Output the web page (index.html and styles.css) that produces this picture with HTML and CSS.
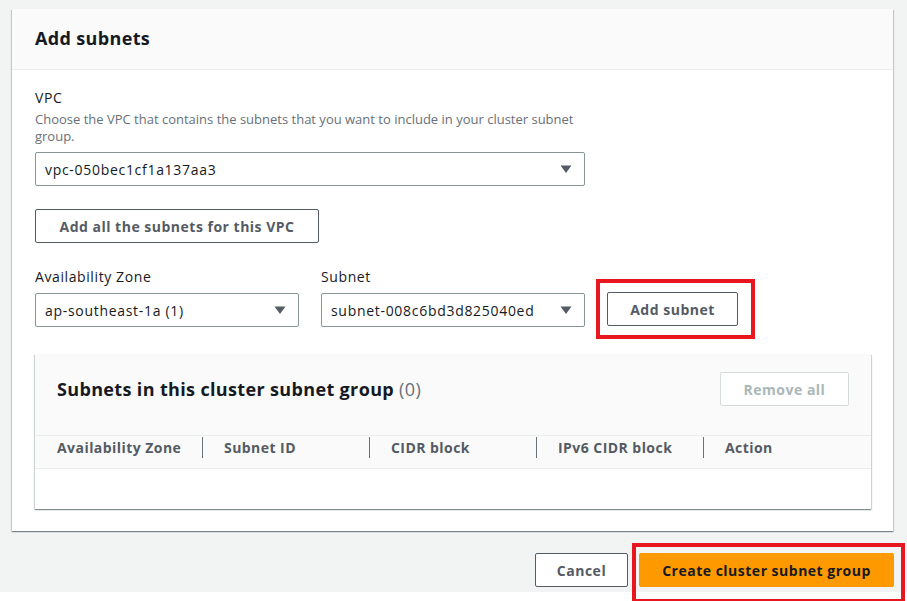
FILE: index.html
```html
<!DOCTYPE html>
<html>
<head>
<meta charset="utf-8">
<link rel="stylesheet" href="styles.css">
</head>
<body>
<div class="page">
  <section class="card">
    <header class="card-header"><h2>Add subnets</h2></header>
    <div class="card-body">
      <div class="field">
        <div class="label">VPC</div>
        <div class="desc">Choose the VPC that contains the subnets that you want to include in your cluster subnet group.</div>
        <div class="select wide">
          <span>vpc-050bec1cf1a137aa3</span>
          <svg class="caret" width="12" height="10" viewBox="0 0 12 10"><path d="M0.5 1.5h11L6 9z" fill="#545b64"/></svg>
        </div>
      </div>
      <button class="btn btn-all">Add all the subnets for this VPC</button>
      <div class="row">
        <div class="col">
          <div class="label">Availability Zone</div>
          <div class="select half">
            <span>ap-southeast-1a (1)</span>
            <svg class="caret" width="12" height="10" viewBox="0 0 12 10"><path d="M0.5 1.5h11L6 9z" fill="#545b64"/></svg>
          </div>
        </div>
        <div class="col">
          <div class="label">Subnet</div>
          <div class="select half">
            <span>subnet-008c6bd3d825040ed</span>
            <svg class="caret" width="12" height="10" viewBox="0 0 12 10"><path d="M0.5 1.5h11L6 9z" fill="#545b64"/></svg>
          </div>
        </div>
        <div class="highlight-wrap add-wrap">
          <button class="btn btn-add">Add subnet</button>
          <div class="red-box box-add"></div>
        </div>
      </div>
      <div class="table-card">
        <div class="table-header">
          <h3>Subnets in this cluster subnet group <span class="count">(0)</span></h3>
          <button class="btn btn-disabled">Remove all</button>
        </div>
        <div class="thead">
          <div class="th">Availability Zone</div>
          <div class="th sep">Subnet ID</div>
          <div class="th sep">CIDR block</div>
          <div class="th sep">IPv6 CIDR block</div>
          <div class="th sep">Action</div>
        </div>
        <div class="tbody"></div>
      </div>
    </div>
  </section>
  <div class="footer">
    <button class="btn btn-cancel">Cancel</button>
    <div class="highlight-wrap">
      <button class="btn btn-primary">Create cluster subnet group</button>
      <div class="red-box box-create"></div>
    </div>
  </div>
</div>
</body>
</html>
```

FILE: styles.css
```css
* { box-sizing: border-box; }
html, body { margin: 0; padding: 0; background: #fff; }
body {
  font-family: "Open Sans", "Liberation Sans", sans-serif;
  color: #16191f;
  width: 907px;
  height: 601px;
  overflow: hidden;
}
.page {
  background: #f2f3f3;
  height: 592px;
  padding: 9px 0 0 12px;
}
.card {
  width: 881px;
  background: #fff;
  box-shadow: 0 1px 1px 0 rgba(0,28,36,0.3), 1px 1px 1px 0 rgba(0,28,36,0.15), -1px 1px 1px 0 rgba(0,28,36,0.15);
}
.card-header {
  height: 61px;
  background: #fafafa;
  border-bottom: 1px solid #eaeded;
  padding: 0 23px;
  display: flex;
  align-items: center;
}
.card-header h2 {
  margin: 0;
  font-size: 18px;
  font-weight: 700;
  letter-spacing: 0.35px;
  padding-bottom: 2px;
}
.card-body {
  padding: 17px 22px 22px 23px;
}
.label {
  font-size: 14px;
  line-height: 22px;
  letter-spacing: 0.6px;
}
.desc {
  font-size: 13px;
  line-height: 17px;
  color: #687078;
  width: 550px;
  letter-spacing: 0;
  margin-top: 2px;
}
.select {
  height: 34px;
  border: 1px solid #879596;
  border-radius: 2px;
  display: flex;
  align-items: center;
  justify-content: space-between;
  padding: 0 12px 0 9px;
  font-size: 14px;
  letter-spacing: 0.7px;
  margin-top: 7px;
}
.select.wide { width: 550px; }
.select.half { width: 264px; margin-top: 5px; }
.caret { display: block; }
.btn {
  display: block;
  font-family: "Open Sans", "Liberation Sans", sans-serif;
  font-size: 14px;
  font-weight: 700;
  color: #545b64;
  background: #fff;
  border: 1px solid #545b64;
  border-radius: 2px;
  height: 34px;
  padding: 0 20px;
  letter-spacing: 0.5px;
}
.btn-all {
  margin-top: 23px;
  width: 284px;
  padding: 0;
}
.row {
  display: flex;
  align-items: flex-end;
  gap: 22px;
  margin-top: 23px;
}
.highlight-wrap { position: relative; }
.btn-add {
  width: 131px;
  padding: 0;
  margin-bottom: 1px;
}
.red-box {
  position: absolute;
  border: 4px solid #e8161f;
  pointer-events: none;
}
.box-add { left: -11px; top: -13px; width: 159px; height: 60px; }
.box-create { left: -7px; top: -10px; width: 273px; height: 60px; }
.table-card {
  margin-top: 27px;
  width: 836px;
  background: #fff;
  box-shadow: 0 1px 1px 0 rgba(0,28,36,0.3), 1px 1px 1px 0 rgba(0,28,36,0.15), -1px 1px 1px 0 rgba(0,28,36,0.15);
}
.table-header {
  background: #fafafa;
  height: 82px;
  border-bottom: 1px solid #eaeded;
  display: flex;
  justify-content: space-between;
  align-items: flex-start;
  padding: 18px 22px 0 22px;
}
.table-header h3 {
  margin: 0;
  font-size: 18px;
  line-height: 34px;
  font-weight: 700;
  letter-spacing: 0.35px;
}
.count { font-weight: 400; color: #687078; }
.btn-disabled {
  color: #aab7b8;
  border-color: #d5dbdb;
  width: 129px;
  padding: 0;
}
.thead {
  display: flex;
  height: 33px;
  background: #fafafa;
  border-bottom: 1px solid #eaeded;
}
.th {
  width: 167px;
  position: relative;
  padding: 0 0 0 22px;
  font-size: 14px;
  font-weight: 700;
  color: #545b64;
  line-height: 23px;
  letter-spacing: 0.45px;
}
.th:last-child { width: 168px; }
.th.sep::before {
  content: "";
  position: absolute;
  left: 0;
  top: 1px;
  height: 21px;
  border-left: 1px solid #687078;
}
.tbody { height: 40px; }
.footer {
  display: flex;
  justify-content: flex-end;
  gap: 11px;
  margin-top: 22px;
  width: 882px;
}
.btn-cancel { width: 93px; padding: 0; }
.btn-primary {
  background: #ff9900;
  border-color: #ff9900;
  color: #16191f;
  width: 255px;
  padding: 0;
}
```
